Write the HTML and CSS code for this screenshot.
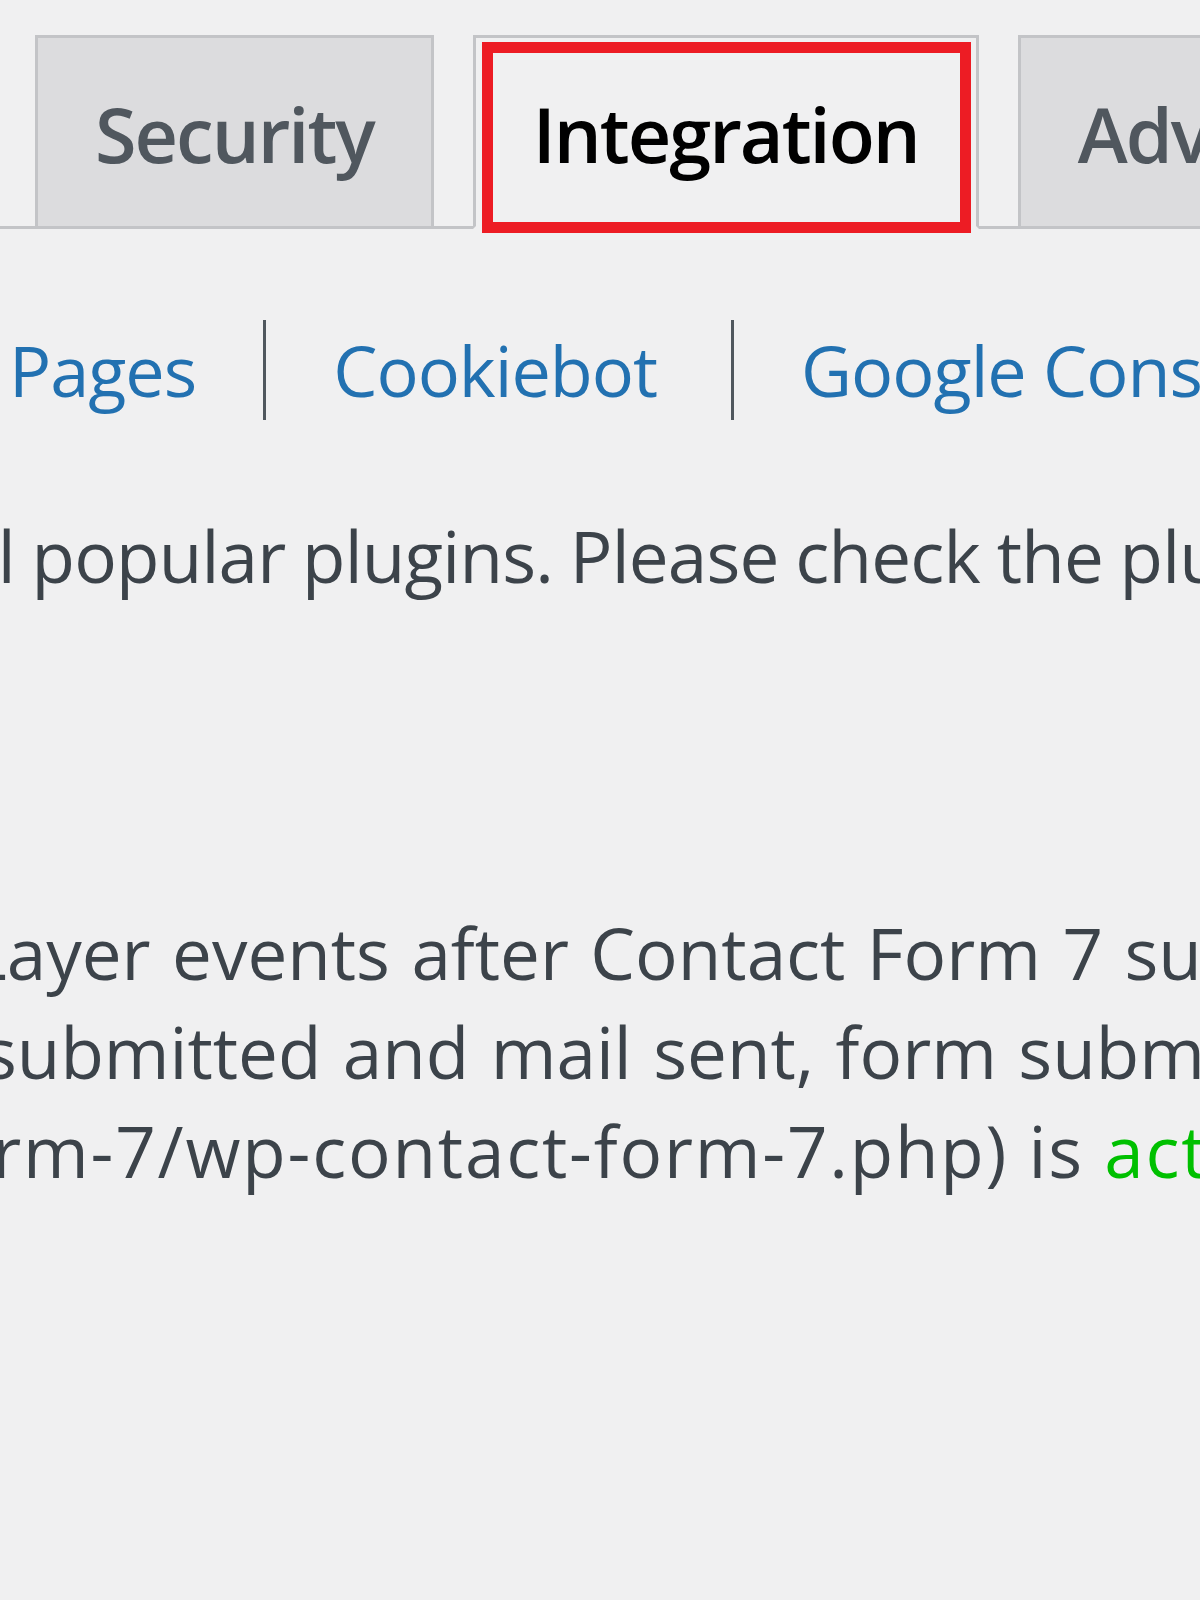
FILE: index.html
```html
<!DOCTYPE html>
<html lang="en">
<head>
<meta charset="utf-8">
<title>Integration settings</title>
<link rel="stylesheet" href="styles.css">
</head>
<body>
<div class="page">
  <nav class="tabs">
    <a class="tab">Security</a>
    <a class="tab active">Integration<span class="highlight"></span></a>
    <a class="tab">Advanced</a>
  </nav>
  <div class="subnav">
    <a class="sublink first">Pages</a><span class="sep s1"></span><a class="sublink">Cookiebot</a><span class="sep s2"></span><a class="sublink">Google Consent Mode</a>
  </div>
  <p class="intro">all popular plugins. Please check the plugin list below.</p>
  <div class="desc">
    <div class="line l1">dataLayer events after Contact Form 7 submission</div>
    <div class="line l2">submitted and mail sent, form submitted</div>
    <div class="line l3">form-7/wp-contact-form-7.php) is <span class="status">active</span>.</div>
  </div>
</div>
</body>
</html>
```
FILE: styles.css
```css
html, body {
  margin: 0;
  padding: 0;
  background: #f0f0f1;
}
body {
  width: 1200px;
  height: 1600px;
  overflow: hidden;
  font-family: "Open Sans", "Noto Sans", sans-serif;
  color: #3c434a;
}
.page {
  width: 1200px;
}
.tabs {
  display: flex;
  gap: 39px;
  padding: 35px 0 0 35px;
  border-bottom: 3px solid #c3c4c7;
}
.tab {
  flex: none;
  display: block;
  border: 3px solid #c3c4c7;
  background: #dcdcde;
  padding: 29px 57px 25px;
  margin-bottom: -3px;
  font-size: 75.6px;
  font-weight: 600;
  letter-spacing: -2px;
  line-height: 134px;
  color: #50575e;
  white-space: nowrap;
}
.tab.active {
  position: relative;
  background: #f0f0f1;
  border-bottom-color: #f0f0f1;
  color: #000;
}
.highlight {
  position: absolute;
  left: 6px;
  right: 5px;
  top: 4px;
  bottom: -7px;
  border: 11px solid #ed1c24;
}
.subnav {
  display: flex;
  align-items: flex-start;
  margin-top: 91px;
  height: 100px;
  font-size: 70.2px;
  letter-spacing: -1px;
  line-height: 100px;
  white-space: nowrap;
}
.sublink {
  flex: none;
  color: #2271b1;
}
.sublink.first {
  margin-left: 9px;
}
.sep {
  flex: none;
  width: 3px;
  height: 100px;
  margin: 0 67px 0 67px;
  background: #50575e;
}
.sep.s2 {
  margin-left: 74px;
}
.intro {
  margin: 87px 0 0 -58px;
  font-size: 71px;
  letter-spacing: -0.8px;
  word-spacing: -1px;
  line-height: 98.3px;
  white-space: nowrap;
}
.desc {
  margin-top: 298px;
  font-size: 71px;
  line-height: 99px;
}
.line {
  white-space: nowrap;
}
.l1 {
  margin-left: -178px;
  word-spacing: 3px;
}
.l2 {
  margin-left: -17px;
  word-spacing: 3px;
}
.l3 {
  margin-left: -78px;
  letter-spacing: 1.8px;
}
.status {
  color: #00c000;
}
```
